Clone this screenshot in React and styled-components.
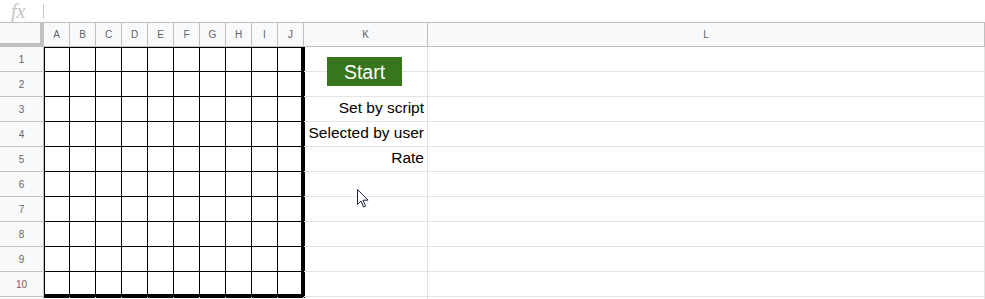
import styled, { createGlobalStyle } from "styled-components";

const GlobalStyle = createGlobalStyle`
  body {
    margin: 0;
    background: #fff;
    font-family: "Liberation Sans", Arial, sans-serif;
    overflow: hidden;
  }
`;

const FormulaBar = styled.div`
  height: 22px;
  border-bottom: 1px solid #c0c0c0;
  display: flex;
  align-items: center;
`;

const FxLabel = styled.span`
  width: 43px;
  padding-left: 11px;
  box-sizing: border-box;
  font-family: "Liberation Serif", serif;
  font-style: italic;
  font-size: 20px;
  line-height: 20px;
  color: #c4c4c4;
`;

const FxDivider = styled.div`
  width: 1px;
  height: 14px;
  background: #c8c8c8;
`;

const Sheet = styled.div`
  position: relative;
  display: grid;
  grid-template-columns: 44px repeat(10, 26px) 124px 557px;
  grid-template-rows: 24px repeat(11, 25px);
`;

const Corner = styled.div`
  box-sizing: border-box;
  background: #f8f9fa;
  border-right: 4px solid #c0c0c0;
  border-bottom: 4px solid #c0c0c0;
`;

const ColHead = styled.div`
  box-sizing: border-box;
  background: #f8f9fa;
  border-right: 1px solid #c0c0c0;
  border-bottom: 1px solid #c0c0c0;
  display: flex;
  align-items: center;
  justify-content: center;
  font-size: 10px;
  color: #5f6368;
`;

const RowHead = styled(ColHead)`
  color: #666;
`;

const BoardCell = styled.div`
  box-sizing: border-box;
  border-right: ${(p) => (p.$last ? "3px" : "1px")} solid #000;
  border-bottom: ${(p) => (p.$bottom ? "3px" : "1px")} solid #000;
  border-left: ${(p) => (p.$first ? "1px solid #000" : "none")};
  border-top: ${(p) => (p.$top ? "1px solid #000" : "none")};
  box-shadow: ${(p) =>
    [p.$last && "1px 0 0 #000", p.$bottom && "0 1px 0 #000", p.$last && p.$bottom && "1px 1px 0 #000"]
      .filter(Boolean)
      .join(", ") || "none"};
`;

const Cell = styled.div`
  position: relative;
  box-sizing: border-box;
  border-right: 1px solid #e2e3e3;
  border-bottom: 1px solid #e2e3e3;
  display: flex;
  align-items: flex-end;
  justify-content: flex-end;
  padding: 0 3px 4px 0;
  font-size: 15.5px;
  line-height: 18px;
  color: #000;
  white-space: nowrap;
`;

const StartButton = styled.div`
  position: absolute;
  left: 23px;
  top: 10px;
  width: 75px;
  height: 29px;
  background: #38761d;
  color: #fff;
  font-size: 19.5px;
  display: flex;
  align-items: center;
  justify-content: center;
  z-index: 2;
`;

const Cursor = styled.svg`
  position: absolute;
  left: 357px;
  top: 166px;
  z-index: 3;
`;

const columns = ["A", "B", "C", "D", "E", "F", "G", "H", "I", "J"];
const labels = { 3: "Set by script", 4: "Selected by user", 5: "Rate" };

export default function App() {
  const rows = Array.from({ length: 11 }, (_, i) => i + 1);
  return (
    <>
      <GlobalStyle />
      <FormulaBar>
        <FxLabel>fx</FxLabel>
        <FxDivider />
      </FormulaBar>
      <Sheet>
        <Corner />
        {columns.map((c) => (
          <ColHead key={c}>{c}</ColHead>
        ))}
        <ColHead>K</ColHead>
        <ColHead>L</ColHead>
        {rows.map((r) => [
          <RowHead key={`h${r}`}>{r <= 10 ? r : null}</RowHead>,
          ...columns.map((c, i) =>
            r <= 10 ? (
              <BoardCell
                key={`${c}${r}`}
                $first={i === 0}
                $top={r === 1}
                $last={i === 9}
                $bottom={r === 10}
              />
            ) : (
              <Cell key={`${c}${r}`} />
            )
          ),
          <Cell key={`K${r}`}>
            {labels[r]}
            {r === 1 && <StartButton>Start</StartButton>}
          </Cell>,
          <Cell key={`L${r}`} />,
        ])}
        <Cursor width="12" height="20" viewBox="0 0 12 20">
          <path
            d="M0.5 0.5 L0.5 15.5 L4 12 L6.5 18 L8.5 17 L6 11.2 L11 11.2 Z"
            fill="#fff"
            stroke="#1a2340"
            strokeWidth="1"
            strokeLinejoin="miter"
          />
        </Cursor>
      </Sheet>
    </>
  );
}
